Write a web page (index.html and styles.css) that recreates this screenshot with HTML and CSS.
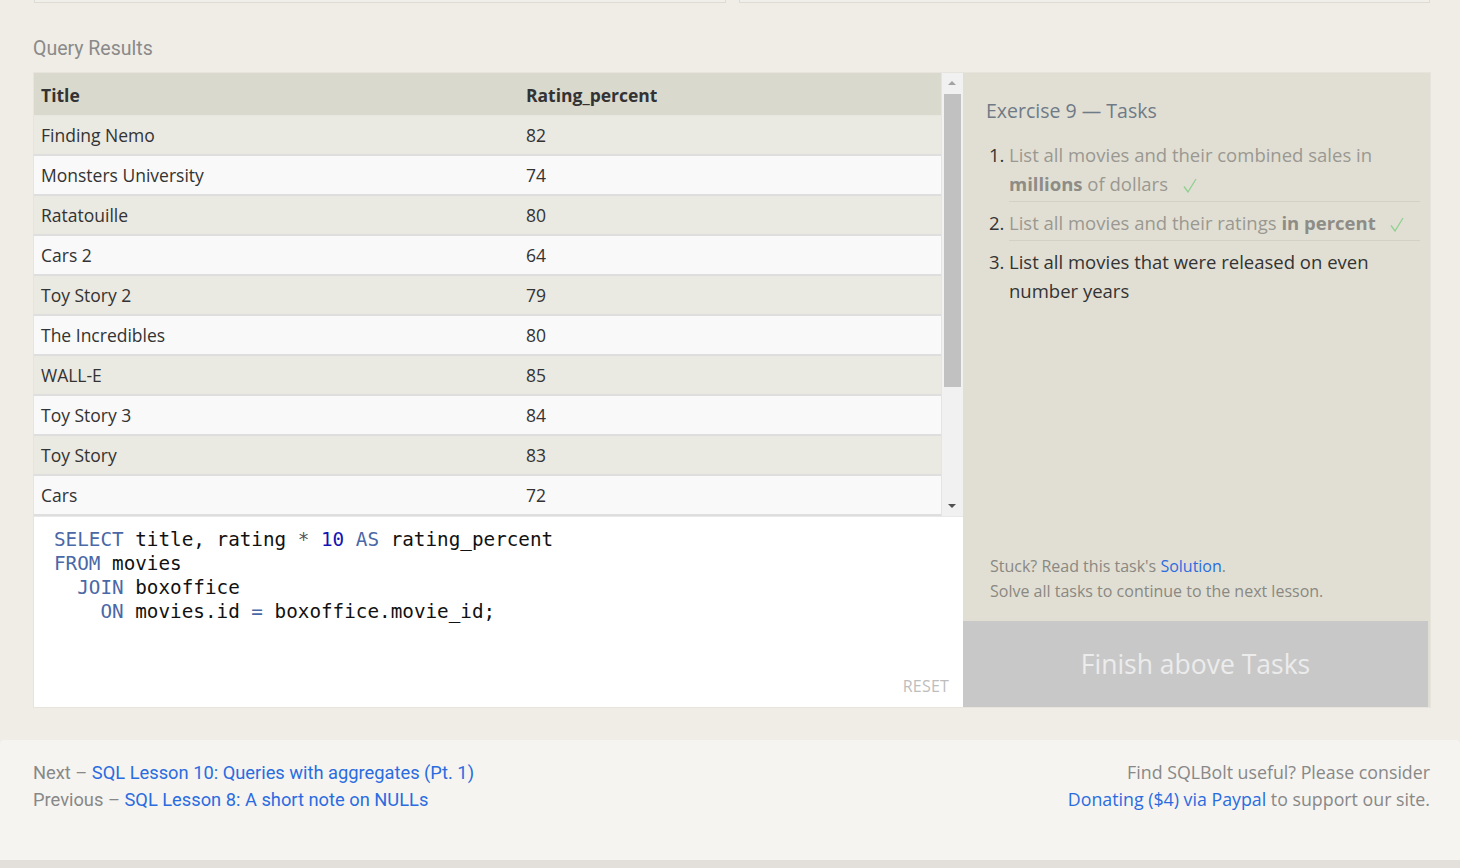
FILE: index.html
```html
<!DOCTYPE html>
<html>
<head>
<meta charset="utf-8">
<link rel="stylesheet" href="styles.css">
</head>
<body>
<div class="page">
  <div class="topstrip">
    <div class="topbox"></div>
    <div class="topbox"></div>
  </div>
  <h3 class="section-title">Query Results</h3>
  <div class="exercise">
    <div class="left">
      <div class="results">
        <div class="table-wrap">
          <table class="results-table">
            <thead>
              <tr><th class="c1">Title</th><th>Rating_percent</th></tr>
            </thead>
            <tbody>
              <tr><td>Finding Nemo</td><td>82</td></tr>
              <tr><td>Monsters University</td><td>74</td></tr>
              <tr><td>Ratatouille</td><td>80</td></tr>
              <tr><td>Cars 2</td><td>64</td></tr>
              <tr><td>Toy Story 2</td><td>79</td></tr>
              <tr><td>The Incredibles</td><td>80</td></tr>
              <tr><td>WALL-E</td><td>85</td></tr>
              <tr><td>Toy Story 3</td><td>84</td></tr>
              <tr><td>Toy Story</td><td>83</td></tr>
              <tr><td>Cars</td><td>72</td></tr>
              <tr><td>Up</td><td>90</td></tr>
            </tbody>
          </table>
        </div>
        <div class="scrollbar">
          <div class="arrow up"></div>
          <div class="track"><div class="thumb"></div></div>
          <div class="arrow down"></div>
        </div>
      </div>
      <div class="editor">
<pre class="code"><span class="kw">SELECT</span> title, rating <span class="op">*</span> <span class="num">10</span> <span class="kw">AS</span> rating_percent
<span class="kw">FROM</span> movies
  <span class="kw">JOIN</span> boxoffice
    <span class="kw">ON</span> movies.id <span class="eq">=</span> boxoffice.movie_id;</pre>
        <div class="reset">RESET</div>
      </div>
    </div>
    <div class="right">
      <div class="tasks">
        <div class="tasks-title">Exercise 9 — Tasks</div>
        <ol class="task-list">
          <li class="done"><span class="num-l">1.</span><span class="t">List all movies and their combined sales in <b>millions</b> of dollars <svg class="check" width="14" height="15" viewBox="0 0 14 15"><path d="M1 8.5 L5 14 L13 1" fill="none" stroke="#8fd190" stroke-width="1.3"/></svg></span></li>
          <li class="done"><span class="num-l">2.</span><span class="t">List all movies and their ratings <b>in percent</b> <svg class="check" width="14" height="15" viewBox="0 0 14 15"><path d="M1 8.5 L5 14 L13 1" fill="none" stroke="#8fd190" stroke-width="1.3"/></svg></span></li>
          <li class="active"><span class="num-l">3.</span><span class="t">List all movies that were released on even number years</span></li>
        </ol>
        <div class="stuck">
          <div>Stuck? Read this task's <a class="link">Solution</a>.</div>
          <div>Solve all tasks to continue to the next lesson.</div>
        </div>
      </div>
      <div class="finish">Finish above Tasks</div>
    </div>
  </div>
</div>
<div class="footer">
  <div class="nav">
    <div>Next – <a class="link">SQL Lesson 10: Queries with aggregates (Pt. 1)</a></div>
    <div>Previous – <a class="link">SQL Lesson 8: A short note on NULLs</a></div>
  </div>
  <div class="donate">
    <div>Find SQLBolt useful? Please consider</div>
    <div><a class="link">Donating ($4) via Paypal</a> to support our site.</div>
  </div>
</div>
<div class="bottomstrip"></div>
</body>
</html>
```
FILE: styles.css
```css
html, body {
  margin: 0;
  padding: 0;
}
body {
  background: #efede6;
  font-family: "Open Sans", "Noto Sans", sans-serif;
  color: #333;
  width: 1460px;
  height: 868px;
  overflow: hidden;
}
.page {
  padding: 0 30px 33px 34px;
}
.topstrip {
  display: flex;
  gap: 13px;
  height: 3px;
}
.topbox {
  flex: 1;
  border: 1px solid #dedbd2;
  border-top: none;
  background: #f1efe9;
}
.section-title {
  margin: 35px 0 13px -1px;
  font-family: Roboto, sans-serif;
  font-weight: 400;
  font-size: 19.5px;
  line-height: 22px;
  color: #8a8a8a;
}
.exercise {
  display: flex;
  height: 634px;
  box-shadow: 0 0 0 1px #e6e4dc;
}
.left {
  width: 929px;
  display: flex;
  flex-direction: column;
  background: #fff;
}
.results {
  display: flex;
  height: 443px;
  border-bottom: 1px solid #e8e8e8;
}
.table-wrap {
  flex: 1;
  overflow: hidden;
}
.results-table {
  width: 100%;
  border-collapse: collapse;
  font-size: 17.5px;
}
.results-table th {
  background: #dad9ce;
  text-align: left;
  font-weight: 700;
  height: 40px;
  padding: 2px 7px 0;
  color: #333;
  border-bottom: 1px solid #e8e7df;
}
.results-table th.c1 {
  width: 471px;
}
.results-table td {
  height: 38px;
  padding: 0 7px;
  border-bottom: 2px solid #dedede;
  color: #333;
}
.results-table tbody tr:nth-child(odd) td {
  background: #eae9e2;
}
.results-table tbody tr:nth-child(even) td {
  background: #f9f9f9;
}
.scrollbar {
  width: 21px;
  background: #f1f1f1;
  display: flex;
  flex-direction: column;
  border-left: 1px solid #e4e4e4;
}
.arrow {
  height: 21px;
  position: relative;
}
.arrow::after {
  content: "";
  position: absolute;
  left: 6px;
  width: 0;
  height: 0;
  border-left: 4px solid transparent;
  border-right: 4px solid transparent;
}
.arrow.up::after {
  top: 8px;
  border-bottom: 4px solid #a3a3a3;
}
.arrow.down::after {
  top: 9px;
  border-top: 4px solid #505050;
}
.track {
  flex: 1;
  padding: 0 2px;
}
.thumb {
  height: 293px;
  background: #c1c1c1;
}
.editor {
  flex: 1;
  position: relative;
}
.code {
  margin: 0;
  padding: 11px 0 0 20px;
  font-family: "DejaVu Sans Mono", "Liberation Mono", monospace;
  font-size: 19.3px;
  line-height: 24px;
  color: #111;
}
.kw {
  color: #4a68a6;
}
.num {
  color: #1414b4;
}
.op {
  color: #555;
}
.eq {
  color: #4a68a6;
}
.reset {
  position: absolute;
  right: 14px;
  bottom: 10px;
  font-size: 16px;
  color: #bdbdbd;
  letter-spacing: 0.2px;
}
.right {
  flex: 1;
  display: flex;
  flex-direction: column;
  background: #e1dfd4;
}
.tasks {
  flex: 1;
  padding: 23px 10px 0 23px;
  display: flex;
  flex-direction: column;
}
.tasks-title {
  font-size: 19.5px;
  line-height: 30px;
  color: #6f7a86;
  margin-bottom: 14px;
}
.task-list {
  list-style: none;
  margin: 0;
  padding: 0;
}
.task-list li {
  display: flex;
  font-size: 18.5px;
  line-height: 29px;
  margin: 0;
  padding: 0;
}
.task-list li + li {
  padding-top: 6px;
}
.task-list li.done .t {
  border-bottom: 1px solid #d3d1c6;
  padding-bottom: 3px;
}
.task-list li.done {
  color: #9a9891;
}
.num-l {
  width: 20px;
  flex: none;
  color: #333;
  padding-left: 3px;
}
.t {
  flex: 1;
}
.task-list li.active .t {
  color: #333;
}
.task-list b {
  font-weight: 700;
  color: #8e8c86;
}
.check {
  margin-left: 10px;
  vertical-align: -2px;
}
.stuck {
  margin-top: auto;
  padding: 0 0 17px 4px;
  font-size: 16px;
  line-height: 25px;
  color: #8a8882;
}
.link {
  color: #2a6ce0;
  text-decoration: none;
}
.finish {
  height: 86px;
  background: #c8c8c8;
  color: #ececec;
  font-size: 26.5px;
  display: flex;
  align-items: center;
  justify-content: center;
  margin-right: 2px;
}
.footer {
  background: #f5f4f0;
  height: 120px;
  border-radius: 4px 4px 0 0;
  padding: 19px 30px 0 33px;
  box-sizing: border-box;
  display: flex;
  justify-content: space-between;
  font-size: 17.8px;
  line-height: 27px;
  color: #888;
}
.nav {
  font-family: Roboto, sans-serif;
  font-size: 18.3px;
}
.donate {
  text-align: right;
}
.bottomstrip {
  height: 8px;
  background: #e3e0db;
}
```
